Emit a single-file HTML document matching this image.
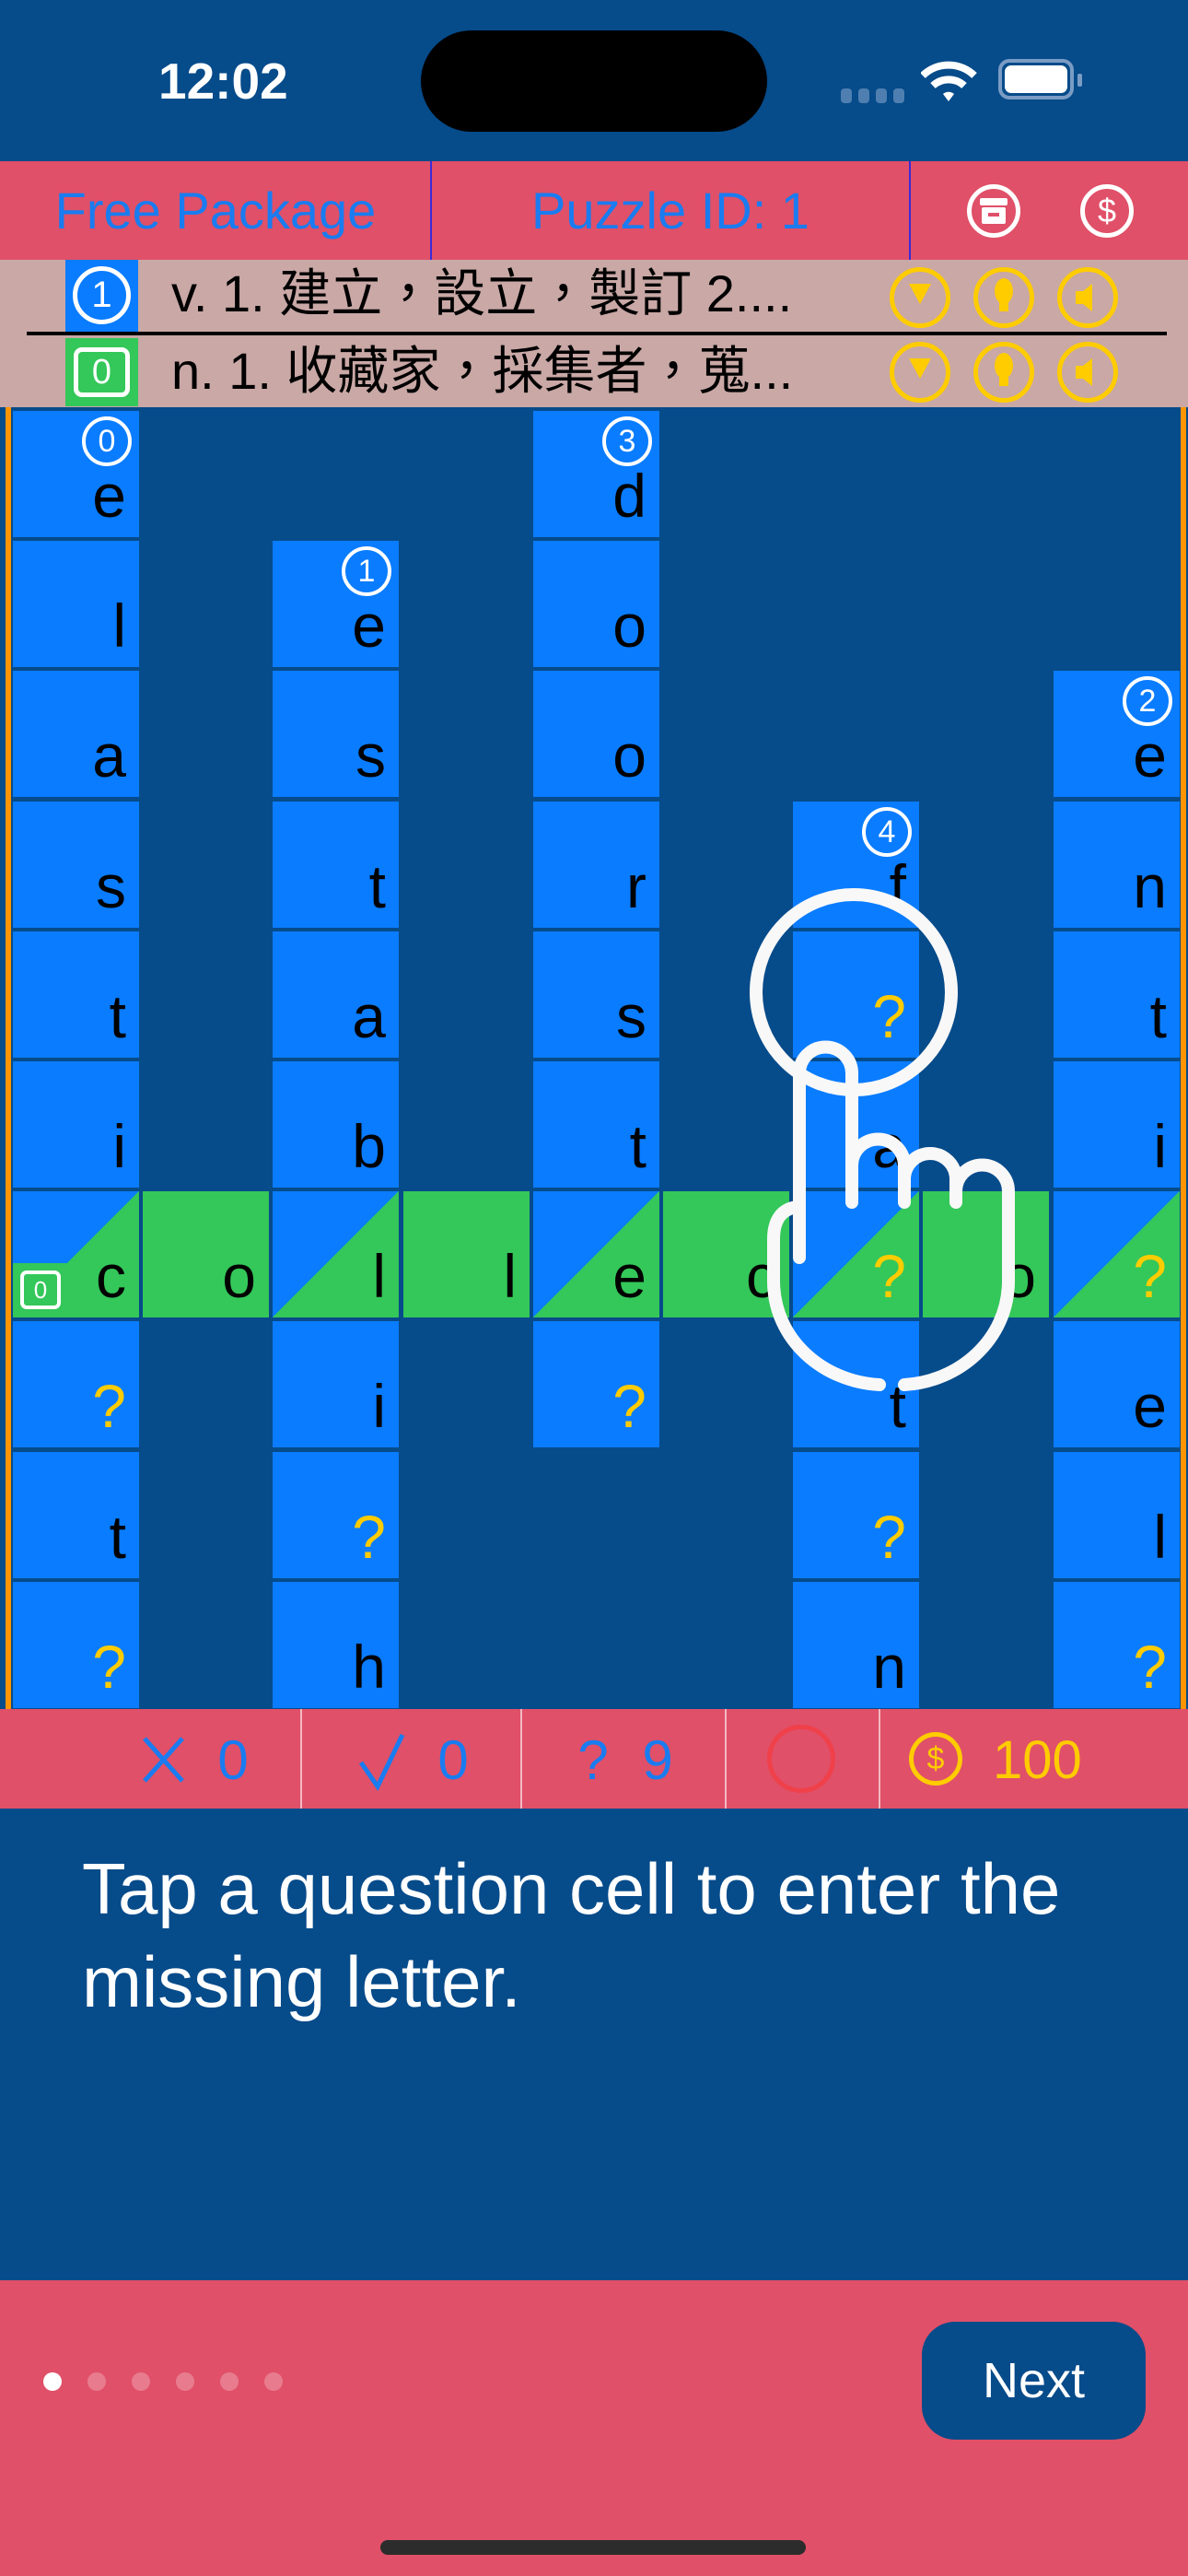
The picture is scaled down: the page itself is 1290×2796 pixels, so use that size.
<!DOCTYPE html>
<html><head><meta charset="utf-8"><style>
*{margin:0;padding:0;box-sizing:border-box}
body{width:1290px;height:2796px;background:#064b8a;position:relative;overflow:hidden;font-family:"Liberation Sans","Noto Sans CJK TC",sans-serif}
.a{position:absolute}
.c{position:absolute;width:137px;height:137px;background:#0a7cff}
.g{background:#34c759}
.d{background:linear-gradient(to bottom right,#0a7cff 50%,#34c759 50%)}
.c span{position:absolute;right:14px;bottom:12px;font-size:66px;line-height:1;color:#000}
.c span.q{color:#ffcc00}
.b{position:absolute;top:6px;right:8px;width:54px;height:54px;border:4px solid #fff;border-radius:50%;color:#fff;font-size:34px;line-height:46px;text-align:center}
.ci{position:absolute;width:66px;height:66px;border:5px solid #ffcc00;border-radius:50%}
.dv{position:absolute;top:1855px;width:2px;height:108px;background:#f3b8c2}
.dot{position:absolute;top:2575px;width:20px;height:20px;border-radius:50%;background:rgba(255,255,255,.25)}
.bt{position:absolute;top:1878px;font-size:60px;line-height:66px;color:#1a7cf0;width:60px;text-align:center}
</style></head><body>
<!-- status bar -->
<div class="a" style="left:172px;top:56px;font-size:55px;font-weight:bold;color:#fff">12:02</div>
<div class="a" style="left:457px;top:33px;width:376px;height:110px;background:#000;border-radius:55px"></div>
<div class="a" style="left:913px;top:96px;width:12px;height:16px;border-radius:4px;background:#4e7fb0"></div>
<div class="a" style="left:932px;top:96px;width:12px;height:16px;border-radius:4px;background:#4e7fb0"></div>
<div class="a" style="left:951px;top:96px;width:12px;height:16px;border-radius:4px;background:#4e7fb0"></div>
<div class="a" style="left:970px;top:96px;width:12px;height:16px;border-radius:4px;background:#4e7fb0"></div>
<svg class="a" style="left:1000px;top:62px" width="62" height="50" viewBox="0 0 62 50"><path d="M2 20 A40 40 0 0 1 58 20" stroke="#fff" stroke-width="8" fill="none"/><path d="M13 31 A25 25 0 0 1 47 31" stroke="#fff" stroke-width="8" fill="none"/><path d="M24 40 L30 48 L36 40 A9 9 0 0 0 24 40Z" fill="#fff"/></svg>
<div class="a" style="left:1084px;top:64px;width:82px;height:44px;border:4px solid #7a9cc4;border-radius:12px"></div>
<div class="a" style="left:1091px;top:71px;width:68px;height:30px;background:#fff;border-radius:7px"></div>
<div class="a" style="left:1170px;top:80px;width:5px;height:14px;background:#7a9cc4;border-radius:2px"></div>

<!-- header -->
<div class="a" style="left:0;top:175px;width:1290px;height:107px;background:#e05068"></div>
<div class="a" style="left:467px;top:175px;width:2px;height:107px;background:#3a2ad8"></div>
<div class="a" style="left:987px;top:175px;width:2px;height:107px;background:#3a2ad8"></div>
<div class="a" style="left:0;top:196px;width:468px;text-align:center;font-size:56px;color:#1a7cf0">Free Package</div>
<div class="a" style="left:468px;top:196px;width:520px;text-align:center;font-size:56px;color:#1a7cf0">Puzzle ID: 1</div>
<div class="a" style="left:1050px;top:200px;width:58px;height:58px;border:5px solid #fff;border-radius:50%"></div>
<div class="a" style="left:1064px;top:215px;width:30px;height:8px;background:#fff;border-radius:2px"></div>
<div class="a" style="left:1066px;top:225px;width:26px;height:18px;background:#fff;border-radius:2px"></div>
<div class="a" style="left:1073px;top:231px;width:12px;height:4px;background:#e05068"></div>
<div class="a" style="left:1173px;top:200px;width:58px;height:58px;border:5px solid #fff;border-radius:50%;color:#fff;font-size:36px;line-height:48px;text-align:center">$</div>

<!-- clues -->
<div class="a" style="left:0;top:282px;width:1290px;height:160px;background:#c9a8a6"></div>
<div class="a" style="left:71px;top:282px;width:79px;height:78px;background:#0a7cff"></div>
<div class="a" style="left:79px;top:289px;width:63px;height:63px;border:5px solid #fff;border-radius:50%;color:#fff;font-size:40px;line-height:53px;text-align:center">1</div>
<div class="a" style="left:186px;top:286px;font-size:56px;line-height:66px;color:#000;white-space:nowrap">v. 1. 建立，設立，製訂 2....</div>
<div class="a" style="left:29px;top:360px;width:1238px;height:4px;background:#000"></div>
<div class="a" style="left:71px;top:367px;width:79px;height:74px;background:#34c759"></div>
<div class="a" style="left:80px;top:377px;width:61px;height:54px;border:5px solid #fff;border-radius:9px;color:#fff;font-size:38px;line-height:44px;text-align:center">0</div>
<div class="a" style="left:186px;top:370px;font-size:56px;line-height:66px;color:#000;white-space:nowrap">n. 1. 收藏家，採集者，蒐...</div>
<div class="ci" style="left:966px;top:290px"></div><div class="ci" style="left:1057px;top:290px"></div><div class="ci" style="left:1148px;top:290px"></div>
<div class="ci" style="left:966px;top:371px"></div><div class="ci" style="left:1057px;top:371px"></div><div class="ci" style="left:1148px;top:371px"></div>
<svg class="a" style="left:0;top:0" width="1290" height="450"><g fill="#ffcc00"><path d="M987 308 h24 l-12 22z"/><path d="M987 389 h24 l-12 22z"/><ellipse cx="1090" cy="316" rx="10" ry="14"/><rect x="1085" y="324" width="10" height="14"/><ellipse cx="1090" cy="397" rx="10" ry="14"/><rect x="1085" y="405" width="10" height="14"/><path d="M1168 316 h8 l10 -8 v30 l-10 -8 h-8z"/><path d="M1168 397 h8 l10 -8 v30 l-10 -8 h-8z"/></g></svg>

<!-- grid borders -->
<div class="a" style="left:6px;top:442px;width:6px;height:1413px;background:#ff9500"></div>
<div class="a" style="left:1282px;top:442px;width:6px;height:1413px;background:#ff9500"></div>

<!-- col0 -->
<div class="c" style="left:14px;top:446px"><div class="b">0</div><span>e</span></div>
<div class="c" style="left:14px;top:587px"><span>l</span></div>
<div class="c" style="left:14px;top:728px"><span>a</span></div>
<div class="c" style="left:14px;top:870px"><span>s</span></div>
<div class="c" style="left:14px;top:1011px"><span>t</span></div>
<div class="c" style="left:14px;top:1152px"><span>i</span></div>
<div class="c d" style="left:14px;top:1293px"><span>c</span><div class="a" style="left:0;top:78px;width:60px;height:58px;background:#34c759"><div class="a" style="left:8px;top:8px;width:44px;height:42px;border:4px solid #fff;border-radius:7px;color:#fff;font-size:26px;line-height:34px;text-align:center">0</div></div></div>
<div class="c" style="left:14px;top:1434px"><span class="q">?</span></div>
<div class="c" style="left:14px;top:1576px"><span>t</span></div>
<div class="c" style="left:14px;top:1717px"><span class="q">?</span></div>
<!-- col1 -->
<div class="c g" style="left:155px;top:1293px"><span>o</span></div>
<!-- col2 -->
<div class="c" style="left:296px;top:587px"><div class="b">1</div><span>e</span></div>
<div class="c" style="left:296px;top:728px"><span>s</span></div>
<div class="c" style="left:296px;top:870px"><span>t</span></div>
<div class="c" style="left:296px;top:1011px"><span>a</span></div>
<div class="c" style="left:296px;top:1152px"><span>b</span></div>
<div class="c d" style="left:296px;top:1293px"><span>l</span></div>
<div class="c" style="left:296px;top:1434px"><span>i</span></div>
<div class="c" style="left:296px;top:1576px"><span class="q">?</span></div>
<div class="c" style="left:296px;top:1717px"><span>h</span></div>
<!-- col3 -->
<div class="c g" style="left:438px;top:1293px"><span>l</span></div>
<!-- col4 -->
<div class="c" style="left:579px;top:446px"><div class="b">3</div><span>d</span></div>
<div class="c" style="left:579px;top:587px"><span>o</span></div>
<div class="c" style="left:579px;top:728px"><span>o</span></div>
<div class="c" style="left:579px;top:870px"><span>r</span></div>
<div class="c" style="left:579px;top:1011px"><span>s</span></div>
<div class="c" style="left:579px;top:1152px"><span>t</span></div>
<div class="c d" style="left:579px;top:1293px"><span>e</span></div>
<div class="c" style="left:579px;top:1434px"><span class="q">?</span></div>
<!-- col5 -->
<div class="c g" style="left:720px;top:1293px"><span>c</span></div>
<!-- col6 -->
<div class="c" style="left:861px;top:870px"><div class="b">4</div><span>f</span></div>
<div class="c" style="left:861px;top:1011px"><span class="q">?</span></div>
<div class="c" style="left:861px;top:1152px"><span>a</span></div>
<div class="c d" style="left:861px;top:1293px"><span class="q">?</span></div>
<div class="c" style="left:861px;top:1434px"><span>t</span></div>
<div class="c" style="left:861px;top:1576px"><span class="q">?</span></div>
<div class="c" style="left:861px;top:1717px"><span>n</span></div>
<!-- col7 -->
<div class="c g" style="left:1002px;top:1293px"><span>o</span></div>
<!-- col8 -->
<div class="c" style="left:1144px;top:728px"><div class="b">2</div><span>e</span></div>
<div class="c" style="left:1144px;top:870px"><span>n</span></div>
<div class="c" style="left:1144px;top:1011px"><span>t</span></div>
<div class="c" style="left:1144px;top:1152px"><span>i</span></div>
<div class="c d" style="left:1144px;top:1293px"><span class="q">?</span></div>
<div class="c" style="left:1144px;top:1434px"><span>e</span></div>
<div class="c" style="left:1144px;top:1576px"><span>l</span></div>
<div class="c" style="left:1144px;top:1717px"><span class="q">?</span></div>

<!-- hand overlay -->
<svg class="a" style="left:0;top:0" width="1290" height="1600"><g fill="none" stroke="#f8f8f8" stroke-width="14" stroke-linecap="round">
<circle cx="927" cy="1077" r="106"/>
<path d="M868 1365 V1165 A28.5 28.5 0 0 1 925 1165 V1305"/>
<path d="M925 1265 A28.5 28.5 0 0 1 982 1265 V1305"/>
<path d="M982 1280 A28 28 0 0 1 1038 1280 V1305"/>
<path d="M1038 1293 A28.5 28.5 0 0 1 1095 1293 V1390 C1095 1455 1040 1500 982 1503"/>
<path d="M866 1310 C848 1312 840 1325 840 1345 V1390 C840 1455 895 1500 955 1503"/>
</g></svg>

<!-- bottom bar -->
<div class="a" style="left:0;top:1855px;width:1290px;height:108px;background:#e05068"></div>
<div class="dv" style="left:326px"></div><div class="dv" style="left:565px"></div><div class="dv" style="left:787px"></div><div class="dv" style="left:954px"></div>
<svg class="a" style="left:0;top:1855px" width="1290" height="108"><g fill="none" stroke="#1a7cf0" stroke-width="5"><path d="M157 32 L198 78 M198 32 L157 78"/><path d="M392 58 L410 84 L437 28"/></g></svg>
<div class="bt" style="left:223px">0</div>
<div class="bt" style="left:462px">0</div>
<div class="bt" style="left:614px">?</div>
<div class="bt" style="left:684px">9</div>
<div class="a" style="left:833px;top:1872px;width:74px;height:74px;border:5px solid #f0404a;border-radius:50%"></div>
<div class="a" style="left:987px;top:1880px;width:58px;height:58px;border:5px solid #ffcc00;border-radius:50%;color:#ffcc00;font-size:34px;line-height:48px;text-align:center">$</div>
<div class="a" style="left:1078px;top:1878px;font-size:58px;line-height:66px;color:#ffcc00">100</div>

<!-- instruction -->
<div class="a" style="left:89px;top:2000px;width:1190px;font-size:78px;line-height:101px;color:#fff">Tap a question cell to enter the missing letter.</div>

<!-- footer -->
<div class="a" style="left:0;top:2475px;width:1290px;height:321px;background:#e05068"></div>
<div class="dot" style="left:47px;background:#fff"></div>
<div class="dot" style="left:95px"></div><div class="dot" style="left:143px"></div><div class="dot" style="left:191px"></div><div class="dot" style="left:239px"></div><div class="dot" style="left:287px"></div>
<div class="a" style="left:1001px;top:2520px;width:243px;height:128px;background:#064b8a;border-radius:36px;color:#fff;font-size:54px;line-height:128px;text-align:center">Next</div>
<div class="a" style="left:413px;top:2757px;width:462px;height:16px;background:#2c2c2c;border-radius:8px"></div>
</body></html>
